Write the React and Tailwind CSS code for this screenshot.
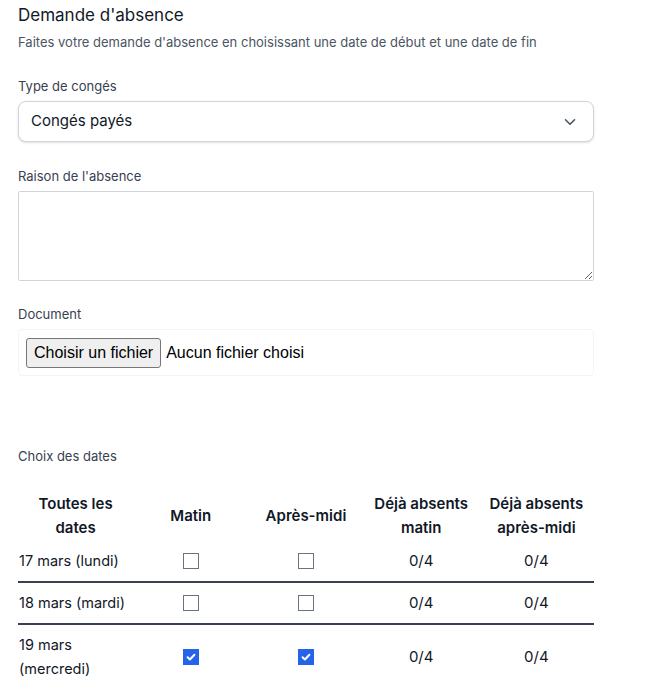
import React from "react";

function Box({ checked }) {
  return (
    <div className="flex h-6 items-center justify-center">
      {checked ? (
        <span className="flex h-4 w-4 items-center justify-center bg-[#2563eb]">
          <svg viewBox="0 0 16 16" className="h-4 w-4" fill="none">
            <path d="M4.6 8.3 L6.9 10.5 L11.4 5.8" stroke="white" strokeWidth="2" strokeLinecap="round" strokeLinejoin="round" />
          </svg>
        </span>
      ) : (
        <span className="block h-4 w-4 border border-[#6b7280] bg-white" />
      )}
    </div>
  );
}

const rows = [
  { d: "17 mars (lundi)", m: false, a: false },
  { d: "18 mars (mardi)", m: false, a: false },
  { d: "19 mars (mercredi)", m: true, a: true },
];

export default function App() {
  return (
    <div className="min-h-[687px] bg-white font-['Inter',sans-serif] text-[#111827]">
      <div className="w-[576px] ml-[18px] pt-[1px]">
        <h1 className="text-[17px] leading-[28px] font-normal text-[#111827]">Demande d'absence</h1>
        <p className="mt-[3px] text-[13px] leading-[20px] text-[#4b5563]">
          Faites votre demande d'absence en choisissant une date de début et une date de fin
        </p>

        <label className="mt-[24px] block text-[13px] leading-[20px] text-[#374151]">Type de congés</label>
        <div className="mt-[5px] flex h-[41px] items-center justify-between rounded-lg border border-[#d1d5db] bg-white pl-[12px] pr-[14px] shadow-sm">
          <span className="text-[15px] text-[#111827]">Congés payés</span>
          <svg viewBox="0 0 20 20" className="h-[18px] w-[18px] text-[#4b5563]" fill="none">
            <path d="M5 7.5 L10 12.5 L15 7.5" stroke="currentColor" strokeWidth="1.8" strokeLinecap="round" strokeLinejoin="round" />
          </svg>
        </div>

        <label className="mt-[24px] block text-[13px] leading-[20px] text-[#374151]">Raison de l'absence</label>
        <textarea className="mt-[5px] block h-[90px] w-full rounded-[2px] border border-[#d1d5db] bg-white" />

        <label className="mt-[23px] block text-[13px] leading-[20px] text-[#374151]">Document</label>
        <div className="mt-[5px] flex h-[47px] items-center rounded-sm border border-[#f3f4f6] bg-white pl-[7px]">
          <span className="inline-flex h-[30px] items-center rounded-[3px] border border-[#767676] bg-[#efefef] px-[7px] font-['Liberation_Sans',Arial,sans-serif] text-[16px] text-black">
            Choisir un fichier
          </span>
          <span className="ml-[5px] font-['Liberation_Sans',Arial,sans-serif] text-[16px] text-black">Aucun fichier choisi</span>
        </div>

        <p className="mt-[70px] text-[13px] leading-[20px] text-[#374151]">Choix des dates</p>

        <table className="mt-[18px] w-full table-fixed border-collapse">
          <thead>
            <tr>
              {["Toutes les dates", "Matin", "Après-midi", "Déjà absents matin", "Déjà absents après-midi"].map((h) => (
                <th key={h} className="px-2 pt-2 pb-[1px] text-center align-middle text-[15px] font-semibold leading-[24px] text-[#111827]">
                  {h}
                </th>
              ))}
            </tr>
          </thead>
          <tbody>
            {rows.map((r, i) => (
              <tr key={r.d} className={i < rows.length - 1 ? "border-b-2 border-[#374151]" : ""}>
                <td className="py-2 pl-px pr-0 text-left align-middle text-[14.5px] leading-[24px]">{r.d}</td>
                <td className="py-2 align-middle">
                  <Box checked={r.m} />
                </td>
                <td className="py-2 align-middle">
                  <Box checked={r.a} />
                </td>
                <td className="py-2 text-center align-middle text-[15px] leading-[24px]">0/4</td>
                <td className="py-2 text-center align-middle text-[15px] leading-[24px]">0/4</td>
              </tr>
            ))}
          </tbody>
        </table>
      </div>
    </div>
  );
}
